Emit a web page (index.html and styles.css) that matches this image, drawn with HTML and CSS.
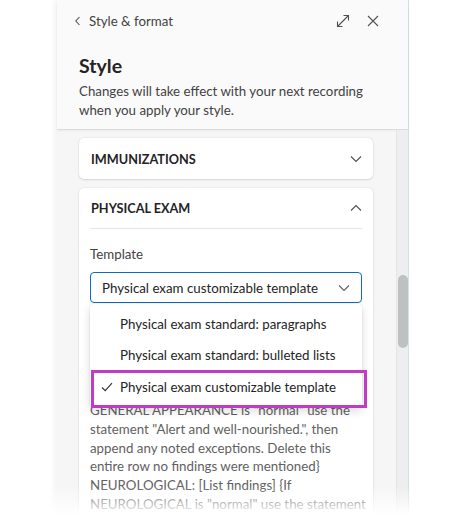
FILE: index.html
```html
<!DOCTYPE html>
<html lang="en">
<head>
<meta charset="utf-8">
<title>Style &amp; format</title>
<link rel="stylesheet" href="styles.css">
</head>
<body>
<div class="stage">
  <aside class="panel">
    <header class="panel-head">
      <div class="toprow">
        <button class="back" aria-label="Back">
          <svg width="8" height="10" viewBox="0 0 8 10"><path d="M5.5 1 L1.8 5 L5.5 9" fill="none" stroke="#505050" stroke-width="1.1"/></svg>
        </button>
        <span class="crumb">Style &amp; format</span>
        <span class="spacer"></span>
        <button class="icon-btn" aria-label="Expand">
          <svg width="14" height="14" viewBox="0 0 14 14"><path d="M1.5 12.5 L12.5 1.5 M7.5 1.5 H12.5 V6.5 M1.5 7.5 V12.5 H6.5" fill="none" stroke="#505050" stroke-width="1.1"/></svg>
        </button>
        <button class="icon-btn close" aria-label="Close">
          <svg width="12" height="12" viewBox="0 0 12 12"><path d="M1 1 L11 11 M11 1 L1 11" fill="none" stroke="#505050" stroke-width="1.1"/></svg>
        </button>
      </div>
      <h1 class="title">Style</h1>
      <p class="desc">Changes will take effect with your next recording when you apply your style.</p>
    </header>
    <div class="body">
      <div class="content">
        <section class="card collapsed">
          <div class="card-head">
            <span class="card-title">IMMUNIZATIONS</span>
            <svg width="12" height="8" viewBox="0 0 12 8"><path d="M1 1.5 L6 6.5 L11 1.5" fill="none" stroke="#505050" stroke-width="1.1"/></svg>
          </div>
        </section>
        <section class="card expanded">
          <div class="card-head divided">
            <span class="card-title">PHYSICAL EXAM</span>
            <svg width="12" height="8" viewBox="0 0 12 8"><path d="M1 6.5 L6 1.5 L11 6.5" fill="none" stroke="#505050" stroke-width="1.1"/></svg>
          </div>
          <label class="field-label">Template</label>
          <div class="select-wrap">
            <div class="select">
              <span>Physical exam customizable template</span>
              <svg width="12" height="8" viewBox="0 0 12 8"><path d="M1 1.5 L6 6.5 L11 1.5" fill="none" stroke="#606060" stroke-width="1.1"/></svg>
            </div>
            <ul class="menu">
              <li class="opt">Physical exam standard: paragraphs</li>
              <li class="opt">Physical exam standard: bulleted lists</li>
              <li class="opt selected">
                <svg class="check" width="12" height="10" viewBox="0 0 12 10"><path d="M1 5.5 L4.2 8.6 L11 1.2" fill="none" stroke="#303030" stroke-width="1.1"/></svg>
                Physical exam customizable template
              </li>
              <li class="highlight" aria-hidden="true"></li>
            </ul>
          </div>
          <p class="template-text"><span class="hidden-line">PHYSICAL EXAM:</span><br><span class="hidden-line">GENERAL APPEARANCE: [List findings]</span><br><span class="hidden-line">{If the patient's appearance is not</span><br><span class="hidden-line">described, omit this section. If the</span><br><span class="hidden-line">patient's</span><br>GENERAL APPEARANCE is "normal" use the<br>statement "Alert and well-nourished.", then<br>append any noted exceptions. Delete this<br>entire row no findings were mentioned}<br>NEUROLOGICAL: [List findings] {If<br>NEUROLOGICAL is "normal" use the statement</p>
        </section>
      </div>
      <div class="scrollbar"><div class="thumb"></div></div>
    </div>
  </aside>
  <div class="fade"></div>
</div>
</body>
</html>
```

FILE: styles.css
```css
* { box-sizing: border-box; }
html, body { margin: 0; padding: 0; background: #ffffff; }
body {
  font-family: Lato, "Noto Sans", "Liberation Sans", sans-serif;
  color: #242424;
  width: 450px;
  height: 514px;
  overflow: hidden;
}
.stage {
  position: relative;
  width: 450px;
  height: 514px;
  padding-left: 57px;
}
.panel {
  width: 352px;
  height: 514px;
  display: flex;
  flex-direction: column;
  background: #f6f6f6;
  border-right: 1px solid #cfe2e8;
  box-shadow: -3px 0 6px rgba(0,0,0,0.05);
}
.panel-head {
  background: #fafafa;
  border-bottom: 1px solid #dcdcdc;
  box-shadow: 0 1px 2px rgba(0,0,0,0.05);
  padding: 9px 22px 9px 22px;
  height: 130px;
  flex-shrink: 0;
}
.toprow {
  display: flex;
  align-items: center;
  height: 24px;
}
button {
  border: 0;
  background: transparent;
  padding: 0;
  display: flex;
  align-items: center;
  justify-content: center;
  cursor: pointer;
}
.back { width: 8px; margin-left: -5px; margin-right: 7px; }
.crumb { font-size: 13.3px; color: #424242; }
.spacer { flex: 1; }
.icon-btn { width: 14px; height: 14px; }
.icon-btn.close { margin-left: 16px; margin-right: 6px; }
.title {
  margin: 19px 0 0 0;
  font-size: 19.5px;
  line-height: 28px;
  font-weight: 700;
  color: #242424;
}
.desc {
  margin: 2px 0 0 0;
  font-size: 13.3px;
  line-height: 18.5px;
  color: #424242;
}
.body {
  flex: 1;
  display: flex;
  min-height: 0;
}
.content {
  flex: 1;
  padding: 8px 23px 0 22px;
  display: flex;
  flex-direction: column;
  gap: 9px;
  overflow: hidden;
}
.card {
  background: #ffffff;
  border-radius: 5px;
  box-shadow: 0 0 2px rgba(0,0,0,0.12), 0 1px 2px rgba(0,0,0,0.10);
  padding: 0 11px;
  flex-shrink: 0;
}
.card.expanded { padding-bottom: 16px; }
.card-head {
  height: 41px;
  display: flex;
  align-items: center;
  justify-content: space-between;
  padding: 0 0 0 1px;
}
.card-head.divided { border-bottom: 1px solid #e6e6e6; }
.card-title {
  font-size: 12.7px;
  font-weight: 700;
  color: #242424;
}
.field-label {
  display: block;
  margin-top: 15px;
  font-size: 13.3px;
  line-height: 20px;
  color: #424242;
}
.select-wrap {
  position: relative;
  margin-top: 8px;
}
.select {
  height: 31px;
  border: 1.5px solid #0f6cbd;
  border-radius: 4px;
  display: flex;
  align-items: center;
  justify-content: space-between;
  padding: 0 11px 0 11px;
  font-size: 13.3px;
  color: #242424;
}
.menu {
  position: absolute;
  top: 32px;
  left: 0;
  right: 0;
  margin: 0;
  padding: 4px 0;
  list-style: none;
  background: #ffffff;
  border-radius: 4px;
  box-shadow: 0 4px 10px rgba(0,0,0,0.14), 0 0 2px rgba(0,0,0,0.12);
  z-index: 2;
}
.opt {
  height: 31.5px;
  display: flex;
  align-items: center;
  padding-left: 30px;
  font-size: 13.3px;
  color: #242424;
  position: relative;
}
.check {
  position: absolute;
  left: 11px;
  top: 11px;
}
.highlight {
  position: absolute;
  left: 1px;
  top: 66px;
  width: 276px;
  height: 38px;
  border: 3px solid #c13cc3;
}
.template-text {
  margin: 4px 0 0 0;
  font-size: 13.3px;
  line-height: 18.8px;
  color: #616161;
  white-space: nowrap;
}
.hidden-line { visibility: hidden; }
.scrollbar {
  width: 12px;
  background: #eeeeee;
  border-left: 1px solid #e6e6e6;
  position: relative;
  padding-top: 145px;
  display: flex;
  justify-content: center;
  align-items: flex-start;
}
.thumb {
  width: 10px;
  height: 73px;
  background: #bdc1c1;
  border-radius: 5px;
}
.fade {
  position: absolute;
  left: 0;
  right: 0;
  bottom: 0;
  height: 28px;
  background: linear-gradient(rgba(255,255,255,0), rgba(255,255,255,0.95));
  z-index: 5;
}
```
